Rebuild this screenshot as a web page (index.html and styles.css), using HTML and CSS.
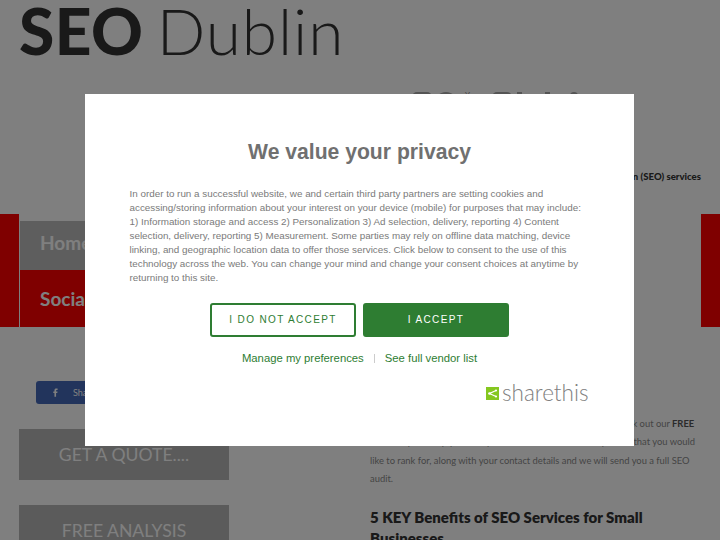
FILE: index.html
```html
<!DOCTYPE html>
<html lang="en">
<head>
    <meta charset="UTF-8">
    <meta name="viewport" content="width=device-width, initial-scale=1.0">
    <title>SEO Dublin</title>
    <link rel="stylesheet" href="styles.css">
</head>
<body>

<!-- Page behind the consent popup -->
<div class="page">
    <header class="site-header">
        <div class="logo"><b>SEO</b> <span>Dublin</span></div>
        <div class="social-icons">
            <span class="icon-box"></span>
            <span class="icon-round"></span>
            <span class="icon-tube">You</span>
            <span class="icon-box"></span>
            <span class="icon-thin icon-i"></span>
            <span class="icon-thin icon-l"></span>
            <span class="icon-thin icon-f"></span>
        </div>
        <p class="tagline">Search Engine Optimisation (SEO) services</p>
    </header>

    <nav class="nav-band">
        <div class="nav-list">
            <a class="nav-home" href="#">Home</a>
            <a class="nav-social" href="#">Social Media</a>
        </div>
    </nav>

    <div class="content">
        <aside class="sidebar">
            <a class="share-btn" href="#">
                <svg width="5" height="9" viewBox="0 0 7 12"><path d="M2 12V6.600H.4V4.600H2V3.200C2 1.200 3 .4 4.600 .4H6.400V2.400H5.200C4.500 2.400 4.300 2.700 4.300 3.300V4.600H6.300L6 6.600H4.300V12Z" fill="#fff"/></svg>
                <span>Share</span>
            </a>
            <a class="side-btn" href="#">GET A QUOTE....</a>
            <a class="side-btn" href="#">FREE ANALYSIS</a>
        </aside>
        <main class="main-col">
            <p class="intro">Looking to improve your search rank and more customers? Check out our <b>FREE</b><br>SEO analysis. Simply submit your website link and the keywords that you would<br>like to rank for, along with your contact details and we will send you a full SEO<br>audit.</p>
            <h3>5 KEY Benefits of SEO Services for Small Businesses</h3>
        </main>
    </div>
</div>

<!-- Consent popup -->
<div class="overlay">
    <div class="popup">
        <h2>We value your privacy</h2>
        <p class="popup-text">In order to run a successful website, we and certain third party partners are setting cookies and accessing/storing information about your interest on your device (mobile) for purposes that may include: 1) Information storage and access 2) Personalization 3) Ad selection, delivery, reporting 4) Content selection, delivery, reporting 5) Measurement. Some parties may rely on offline data matching, device linking, and geographic location data to offer those services. Click below to consent to the use of this technology across the web. You can change your mind and change your consent choices at anytime by returning to this site.</p>
        <div class="popup-buttons">
            <button class="btn-outline">I DO NOT ACCEPT</button>
            <button class="btn-solid">I ACCEPT</button>
        </div>
        <div class="popup-links">
            <a href="#">Manage my preferences</a>
            <span class="divider"></span>
            <a href="#">See full vendor list</a>
        </div>
        <div class="brand">
            <svg width="13" height="13" viewBox="0 0 13 13"><rect width="13" height="13" fill="#85c71f"/><path d="M10 3.500 3.500 6.500 10 9.500" fill="none" stroke="#fff" stroke-width="1.200"/><circle cx="3.500" cy="6.500" r="1.300" fill="#fff"/><circle cx="10" cy="3.500" r="1.100" fill="#fff"/><circle cx="10" cy="9.500" r="1.100" fill="#fff"/></svg>
            <span>sharethis</span>
        </div>
    </div>
</div>

</body>
</html>
```

FILE: styles.css
```css
* {
    box-sizing: border-box;
}

html, body {
    margin: 0;
    height: 100%;
    overflow: hidden;
}

body {
    font-family: "Lato", sans-serif;
    background-color: #fff;
    color: #333;
}

a {
    text-decoration: none;
}

/* Header */
.site-header {
    height: 214px;
    padding: 0 19px 0 19px;
}

.logo {
    font-size: 64px;
    font-weight: 300;
    line-height: 62px;
    height: 62px;
    word-spacing: -4px;
    color: #333;
    white-space: nowrap;
}

.logo b {
    font-weight: 900;
    letter-spacing: 0.5px;
}

.logo span {
    letter-spacing: 0.9px;
}

.social-icons {
    display: flex;
    margin: 30px 0 0 393px;
    height: 30px;
    color: #888;
}

.icon-box {
    width: 20px;
    height: 24px;
    background-color: #a8a8a8;
    border-radius: 5px;
}

.icon-round {
    width: 24px;
    height: 24px;
    margin-left: 2px;
    background-color: #a8a8a8;
    border-radius: 50%;
}

.icon-tube {
    width: 27px;
    margin-left: 7px;
    margin-top: -2px;
    font-size: 8px;
    line-height: 10px;
}

.icon-thin {
    height: 24px;
    background-color: #a8a8a8;
}

.icon-i {
    width: 5px;
    margin-left: 5px;
}

.icon-l {
    width: 5px;
    margin-left: 23px;
}

.icon-f {
    width: 8px;
    margin-left: 20px;
    border-radius: 4px 4px 0 0;
}

.tagline {
    margin: 48px 0 0;
    text-align: right;
    font-size: 9.600px;
    line-height: 14px;
    font-weight: 900;
    color: #333;
}

/* Red nav band */
.nav-band {
    height: 113px;
    background-color: #f00;
    padding: 0 19px;
}

.nav-list {
    height: 113px;
    padding: 7px 0 0 1px;
    background-color: #fff;
    display: flex;
    flex-direction: column;
}

.nav-list a {
    display: block;
    width: 300px;
    padding-left: 20px;
    font-size: 19px;
    font-weight: 700;
    color: #fff;
}

.nav-home {
    height: 49px;
    line-height: 44px;
    background-color: #bdbdbd;
}

.nav-social {
    height: 57px;
    line-height: 57px;
    background-color: #f00;
}

/* Columns under the nav */
.content {
    display: flex;
    padding: 0 19px;
}

.sidebar {
    width: 351px;
    padding-top: 54px;
    flex-shrink: 0;
}

.share-btn {
    display: flex;
    align-items: center;
    gap: 15px;
    width: 110px;
    height: 23px;
    margin-left: 17px;
    padding-left: 17px;
    border-radius: 3px;
    background-color: #4469b8;
    color: #fff;
    font-size: 9px;
}

.side-btn {
    display: block;
    width: 210px;
    height: 51px;
    line-height: 51px;
    margin-top: 25px;
    text-align: center;
    background-color: #b6b6b6;
    color: #fff;
    font-size: 17.600px;
}

.main-col {
    width: 331px;
    padding-top: 88px;
}

.intro {
    margin: 0;
    font-size: 9.400px;
    line-height: 18.300px;
    white-space: nowrap;
    color: #8a8a8a;
}

.intro b {
    color: #555;
}

.main-col h3 {
    margin: 19px 0 0;
    font-size: 15px;
    line-height: 21px;
    font-weight: 800;
    color: #333;
}

/* Consent popup */
.overlay {
    position: fixed;
    top: 0;
    left: 0;
    width: 100%;
    height: 100%;
    background-color: rgba(0, 0, 0, 0.5);
}

.popup {
    position: absolute;
    top: 94px;
    left: 85px;
    width: 549px;
    height: 352px;
    padding: 44px 44.500px 0;
    background-color: #fff;
    font-family: "Liberation Sans", Arial, sans-serif;
}

.popup h2 {
    margin: 0;
    font-size: 21.150px;
    line-height: 28px;
    text-align: center;
    color: #707070;
}

.popup-text {
    margin: 21px 0 0;
    font-size: 9.850px;
    line-height: 14px;
    color: #7a7a7a;
}

.popup-buttons {
    display: flex;
    justify-content: center;
    gap: 7px;
    margin-top: 18px;
}

.popup-buttons button {
    width: 146px;
    height: 34px;
    padding: 0 0 1px;
    border-radius: 3px;
    font-family: inherit;
    font-size: 10px;
    letter-spacing: 1.350px;
}

.btn-outline {
    background-color: #fff;
    border: 2px solid #2e7d32;
    color: #2e7d32;
}

.btn-solid {
    background-color: #2e7d32;
    border: 2px solid #2e7d32;
    color: #fff;
}

.popup-links {
    display: flex;
    justify-content: center;
    align-items: center;
    gap: 10px;
    margin-top: 11px;
    font-size: 11.300px;
    line-height: 20px;
}

.popup-links a {
    color: #2e7d32;
}

.divider {
    width: 1px;
    height: 9px;
    background-color: #ccc;
}

.brand {
    display: flex;
    justify-content: flex-end;
    align-items: center;
    gap: 3px;
    margin-top: 12px;
    padding-right: 1px;
    font-family: "Lato", sans-serif;
    font-weight: 300;
    font-size: 22.500px;
    line-height: 26px;
    color: #808080;
}
```
